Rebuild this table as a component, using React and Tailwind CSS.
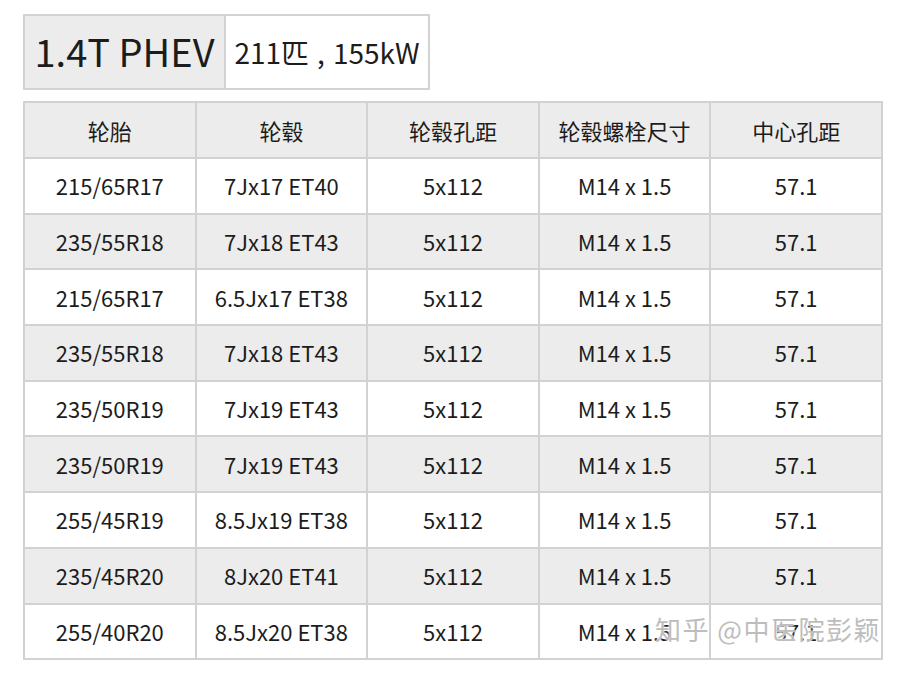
import React from 'react';

const headers = ['轮胎', '轮毂', '轮毂孔距', '轮毂螺栓尺寸', '中心孔距'];

const rows = [
    ['215/65R17', '7Jx17 ET40'],
    ['235/55R18', '7Jx18 ET43'],
    ['215/65R17', '6.5Jx17 ET38'],
    ['235/55R18', '7Jx18 ET43'],
    ['235/50R19', '7Jx19 ET43'],
    ['235/50R19', '7Jx19 ET43'],
    ['255/45R19', '8.5Jx19 ET38'],
    ['235/45R20', '8Jx20 ET41'],
    ['255/40R20', '8.5Jx20 ET38'],
];

export default function App() {
    return (
        <div
            className="relative w-[903px] h-[673px] bg-white text-[#1c1c1c] overflow-hidden"
            style={{ fontFamily: '"Noto Sans CJK TC", "Noto Sans CJK SC", "Noto Sans", sans-serif' }}
        >
            <div className="pt-[14px] pl-[23px]">
                {/* Engine label */}
                <div className="flex w-[407px] h-[76px] border-2 border-[#d2d2d2]">
                    <div className="w-[201px] bg-[#ececec] border-r-2 border-[#d2d2d2] flex items-center justify-center text-[38px] leading-none pb-[2px]">
                        1.4T PHEV
                    </div>
                    <div className="flex-1 flex items-center justify-center text-[28px] leading-none pb-[1px]">
                        211匹<span className="mx-[8px]">,</span>155kW
                    </div>
                </div>

                {/* Spec table */}
                <div className="mt-[11px] w-[860px] border-2 border-[#d2d2d2] text-[22px]">
                    <div className="flex h-[54px] bg-[#ececec]">
                        {headers.map((h, i) => (
                            <div
                                key={h}
                                className={`flex-1 flex items-center justify-center ${i > 0 ? 'border-l-2 border-[#d2d2d2]' : ''}`}
                            >
                                {h}
                            </div>
                        ))}
                    </div>
                    {rows.map((r, idx) => (
                        <div
                            key={idx}
                            className={`flex h-[55.7px] border-t-2 border-[#d2d2d2] ${idx % 2 === 1 ? 'bg-[#ececec]' : 'bg-white'}`}
                        >
                            {[r[0], r[1], '5x112', 'M14 x 1.5', '57.1'].map((c, i) => (
                                <div
                                    key={i}
                                    className={`flex-1 flex items-center justify-center ${i > 0 ? 'border-l-2 border-[#d2d2d2]' : ''}`}
                                >
                                    {c}
                                </div>
                            ))}
                        </div>
                    ))}
                </div>
            </div>

            {/* Watermark */}
            <div
                className="absolute left-[655px] top-[616px] text-[26px] leading-none tracking-[1.5px] text-[#bdbdbd] whitespace-nowrap"
                style={{ textShadow: '0 0 2px #fff, 0 0 2px #fff' }}
            >
                知乎 @中医院彭颖
            </div>
        </div>
    );
}
